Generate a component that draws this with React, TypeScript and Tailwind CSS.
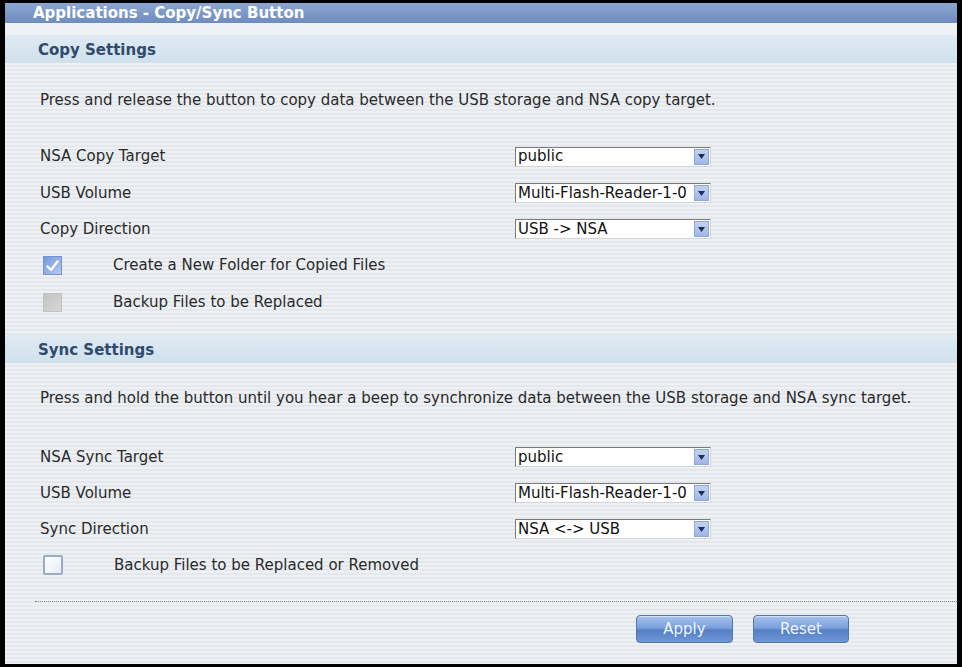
import React from "react";

const stripes =
  "bg-[image:repeating-linear-gradient(180deg,#eef1f4_0px,#eef1f4_2px,#e4e8ed_2px,#e4e8ed_4px)]";

function Select({ value }: { value: string }) {
  return (
    <div className="relative flex h-[20px] w-[196px] items-center overflow-hidden border border-t-[#7b7b7b] border-l-[#7b7b7b] border-r-[#d4d4d4] border-b-[#d4d4d4] bg-white">
      <span className="whitespace-nowrap pl-[2px] text-[15px] leading-none text-[#111]">{value}</span>
      <div className="absolute right-[1px] top-[1px] flex h-[16px] w-[15px] items-center justify-center border border-[#8fa7d6] bg-[linear-gradient(#c3d3f1,#9fb7e6)]">
        <svg width="7" height="5" viewBox="0 0 7 5">
          <path d="M0 0 H7 L3.5 5 Z" fill="#1e2d52" />
        </svg>
      </div>
    </div>
  );
}

function Row({ label, value, h }: { label: string; value: string; h: string }) {
  return (
    <div className={`flex items-center pl-[35px] ${h}`}>
      <span className="w-[475px] text-[15px] text-[#2a2a2a]">{label}</span>
      <Select value={value} />
    </div>
  );
}

function Check({ kind, label, h }: { kind: "checked" | "disabled" | "empty"; label: string; h: string }) {
  let box: React.ReactNode;
  if (kind === "checked") {
    box = (
      <div className="flex h-[19px] w-[19px] items-center justify-center border border-[#7592cc] bg-[linear-gradient(135deg,#7898da,#b4c8f0)]">
        <svg width="13" height="12" viewBox="0 0 13 12">
          <path d="M1.5 6.5 L5 10 L11.5 1.5" stroke="#ffffff" strokeWidth="2.4" fill="none" strokeLinecap="round" strokeLinejoin="round" />
        </svg>
      </div>
    );
  } else if (kind === "disabled") {
    box = <div className="h-[19px] w-[19px] border border-[#c2c2c2] bg-[linear-gradient(135deg,#c4c4c4,#d6d6d6)]" />;
  } else {
    box = <div className="h-[20px] w-[20px] rounded-[2px] border-2 border-[#9aabc8] bg-[linear-gradient(135deg,#ffffff,#e6ecf6)]" />;
  }
  return (
    <div className={`flex items-center pl-[38px] ${h}`}>
      {box}
      <span className="ml-[51px] text-[15px] text-[#2a2a2a]">{label}</span>
    </div>
  );
}

function Band({ title }: { title: string }) {
  return (
    <div className="flex h-[28px] items-center bg-[linear-gradient(#e0ebf3,#cfe0ec)] pl-[33px] pt-[2px]">
      <span className="text-[15px] font-bold text-[#2f4b6c]">{title}</span>
    </div>
  );
}

function Button({ label, w }: { label: string; w: string }) {
  return (
    <div
      className={`flex h-[28px] ${w} items-center justify-center rounded-[4px] border border-[#5476ad] bg-[linear-gradient(#a8c2ec,#7aa0dc_45%,#557fc4_55%,#6f97d6)] text-[15px] text-[#eef4ff] shadow-[inset_0_1px_0_rgba(255,255,255,0.5)]`}
    >
      {label}
    </div>
  );
}

export default function App() {
  return (
    <div className="h-[667px] w-[962px] bg-black px-[5px] pb-[3px] pt-[3px] font-['DejaVu_Sans',sans-serif]">
      <div className={`flex h-full flex-col ${stripes}`}>
        <div className="flex h-[20px] items-center bg-[linear-gradient(#8ca6d1,#6e8cbe)] pl-[28px]">
          <span className="text-[15px] font-bold text-white">Applications - Copy/Sync Button</span>
        </div>
        <div className="h-[12px] bg-[#eef2f6]" />
        <Band title="Copy Settings" />
        <div className="flex h-[75px] items-center pl-[35px]">
          <span className="text-[15px] text-[#2a2a2a]">
            Press and release the button to copy data between the USB storage and NSA copy target.
          </span>
        </div>
        <Row label="NSA Copy Target" value="public" h="h-[37px]" />
        <Row label="USB Volume" value="Multi-Flash-Reader-1-0" h="h-[36px]" />
        <Row label="Copy Direction" value="USB -> NSA" h="h-[36px]" />
        <Check kind="checked" label="Create a New Folder for Copied Files" h="h-[37px]" />
        <Check kind="disabled" label="Backup Files to be Replaced" h="h-[37px]" />
        <div className="h-[14px]" />
        <Band title="Sync Settings" />
        <div className="flex h-[70px] items-center pl-[35px]">
          <span className="text-[15px] text-[#2a2a2a]">
            Press and hold the button until you hear a beep to synchronize data between the USB storage and NSA sync target.
          </span>
        </div>
        <div className="h-[6px]" />
        <Row label="NSA Sync Target" value="public" h="h-[36px]" />
        <Row label="USB Volume" value="Multi-Flash-Reader-1-0" h="h-[36px]" />
        <Row label="Sync Direction" value="NSA <-> USB" h="h-[36px]" />
        <Check kind="empty" label="Backup Files to be Replaced or Removed" h="h-[36px]" />
        <div className="h-[18px]" />
        <div className="ml-[30px] h-0 border-t border-dotted border-[#8a8a8a]" />
        <div className="mt-[13px] flex justify-end gap-[20px] pr-[108px]">
          <Button label="Apply" w="w-[97px]" />
          <Button label="Reset" w="w-[96px]" />
        </div>
      </div>
    </div>
  );
}
